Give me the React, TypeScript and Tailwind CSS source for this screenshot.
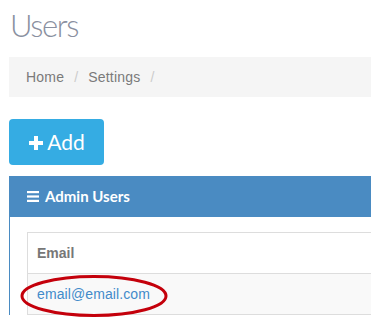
import React from "react";

export default function App() {
  return (
    <div className="w-[371px] h-[328px] overflow-hidden bg-white relative" style={{ fontFamily: "'Liberation Sans', Arial, sans-serif" }}>
      <div className="pl-[9px]">
        <h1 className="pt-[5px] pl-[1px] h-[57px] text-[31px] leading-[40px] tracking-[-1.4px] text-[#8a90a0] font-light" style={{ fontFamily: "Lato, sans-serif" }}>
          Users
        </h1>
        <div className="h-[40px] w-[400px] bg-[#f5f5f5] flex items-center pl-[17px] text-[14px] tracking-[0.2px] text-[#7a7a7a]">
          <span>Home</span>
          <span className="px-[10px] text-[#cccccc]">/</span>
          <span>Settings</span>
          <span className="px-[10px] text-[#cccccc]">/</span>
        </div>
        <div className="mt-[22px] h-[46px] w-[95px] rounded-[4px] bg-[#35ace3] flex items-center justify-center gap-[3px] text-white text-[21px]" style={{ fontFamily: "Lato, sans-serif" }}>
          <svg width="16" height="16" viewBox="0 0 16 16" className="mt-[1px]">
            <path d="M6 1h4v5h5v4h-5v5H6v-5H1V6h5z" fill="white" />
          </svg>
          <span>Add</span>
        </div>
        <div className="mt-[11px] w-[400px] border-l border-[#4a8bc2]">
          <div className="h-[41px] bg-[#4a8bc2] flex items-center pl-[17px] gap-[6px] text-white text-[15px] font-bold" style={{ fontFamily: "Lato, sans-serif" }}>
            <svg width="12" height="11" viewBox="0 0 12 11">
              <rect x="0" y="0" width="12" height="2.2" fill="white" />
              <rect x="0" y="4.4" width="12" height="2.2" fill="white" />
              <rect x="0" y="8.8" width="12" height="2.2" fill="white" />
            </svg>
            <span>Admin Users</span>
          </div>
          <div className="pt-[15px] pl-[17px]">
            <div className="border-l border-t border-[#dddddd]">
              <div className="h-[41px] flex items-center pl-[9px] text-[14px] font-bold text-[#777777] border-b border-[#dddddd]">
                Email
              </div>
              <div className="h-[41px] flex items-center pl-[9px] pt-[1px] text-[14px] tracking-[0.1px] text-[#428bca] bg-[#f9f9f9] border-b border-[#dddddd]">
                email@email.com
              </div>
            </div>
          </div>
        </div>
      </div>
      <svg className="absolute left-[20px] top-[274px]" width="150" height="44" viewBox="0 0 150 44">
        <ellipse cx="74" cy="22" rx="72" ry="19.5" fill="none" stroke="#c4000b" strokeWidth="3" />
      </svg>
    </div>
  );
}
